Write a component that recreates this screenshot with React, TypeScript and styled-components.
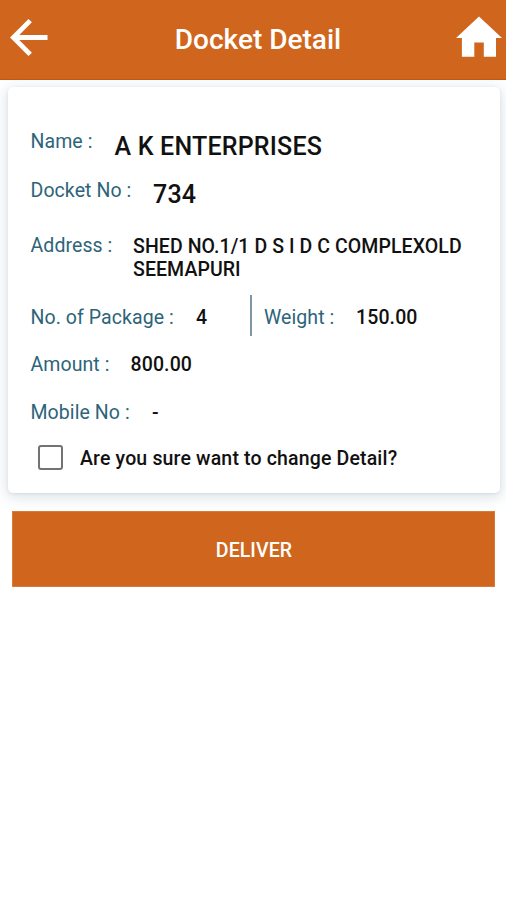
import React from 'react';
import styled, { createGlobalStyle } from 'styled-components';

const GlobalStyle = createGlobalStyle`
  * { box-sizing: border-box; }
  body { margin: 0; background: #fff; font-family: Roboto, "Liberation Sans", sans-serif; }
`;

const Screen = styled.div`
  width: 506px;
  height: 900px;
  overflow: hidden;
  background: #fff;
`;

const Toolbar = styled.header`
  display: flex;
  align-items: center;
  justify-content: space-between;
  height: 80px;
  padding: 0 3px 3px 7px;
  background: #d0661d;
  border-bottom: 1px solid #c65709;
`;

const Title = styled.h1`
  margin: 0;
  padding: 4px 0 0 12px;
  color: #fff;
  font-size: 28px;
  font-weight: 500;
  line-height: 34px;
`;

const IconButton = styled.button`
  display: flex;
  padding: 0;
  border: 0;
  background: none;
`;

const Content = styled.main`
  padding: 7px 6px 0 8px;
`;

const Card = styled.section`
  height: 406px;
  padding: 43px 23px 0 22.5px;
  border-radius: 5px;
  background: #fff;
  box-shadow: 0 1px 3px rgba(70, 95, 110, 0.12), 0 3px 14px 2px rgba(90, 130, 155, 0.2);
`;

const Row = styled.div<{ $height: number }>`
  display: flex;
  align-items: flex-start;
  height: ${(p) => p.$height}px;
`;

const Label = styled.span<{ $width: number; $drop?: boolean }>`
  flex: none;
  width: ${(p) => p.$width}px;
  padding-top: ${(p) => (p.$drop ? 1 : 0)}px;
  color: #2d6479;
  font-size: 19.5px;
  line-height: 24px;
  letter-spacing: 0.08px;
  white-space: nowrap;
`;

const Value = styled.span`
  padding-top: 1px;
  color: #111;
  font-size: 19.5px;
  font-weight: 500;
  line-height: 24px;
  letter-spacing: 0.12px;
  white-space: nowrap;
`;

const Address = styled(Value)`
  line-height: 23px;
  letter-spacing: 0.08px;
`;

const LargeValue = styled(Value)<{ $top: number }>`
  padding-top: ${(p) => p.$top}px;
  font-size: 25px;
  line-height: 30px;
  letter-spacing: 0.2px;
`;

const Question = styled(Value)`
  letter-spacing: 0.16px;
`;

const Half = styled.div<{ $width?: number }>`
  display: flex;
  width: ${(p) => (p.$width ? `${p.$width}px` : 'auto')};
`;

const Divider = styled.div`
  width: 2px;
  height: 41px;
  margin: -10px 12px 0 0;
  background: #7d97a8;
`;

const CheckRow = styled.label`
  display: flex;
  align-items: center;
  gap: 17.5px;
  height: 24px;
  padding-left: 7px;
`;

const Checkbox = styled.input`
  appearance: none;
  width: 25px;
  height: 25px;
  flex: none;
  margin: 0 0 1px;
  border: 2px solid #737373;
  border-radius: 3px;
  background: #fff;
`;

const DeliverButton = styled.button`
  display: block;
  position: relative;
  width: 483px;
  height: 76px;
  margin: 18px 0 0 4px;
  padding: 3px 0 0 1px;
  border: 1px solid #d87a3c;
  background: #d0661d;
  color: #fff;
  font-family: inherit;
  font-size: 19.5px;
  font-weight: 500;
  letter-spacing: 0.1px;
`;

export default function App() {
  return (
    <>
      <GlobalStyle />
      <Screen>
        <Toolbar>
          <IconButton aria-label="Back">
            <svg width="42" height="42" viewBox="0 0 42 42" fill="none" stroke="#fff" strokeWidth="4.8">
              <path d="M40.5 20.5H6M23.2 3.6L6.4 20.5L23.2 37.4" />
            </svg>
          </IconButton>
          <Title>Docket Detail</Title>
          <IconButton aria-label="Home">
            <svg width="48" height="44" viewBox="0 0 48 44" fill="#fff">
              <path d="M24 0.5L47 22H41V40.7H28.8V26.5H19.3V40.7H6.9V22H1Z" />
            </svg>
          </IconButton>
        </Toolbar>
        <Content>
          <Card>
            <Row $height={49}>
              <Label $width={84}>Name :</Label>
              <LargeValue $top={2}>A K ENTERPRISES</LargeValue>
            </Row>
            <Row $height={55}>
              <Label $width={122.5}>Docket No :</Label>
              <LargeValue $top={1}>734</LargeValue>
            </Row>
            <Row $height={71}>
              <Label $width={102.5}>Address :</Label>
              <Address>SHED NO.1/1 D S I D C COMPLEXOLD<br />SEEMAPURI</Address>
            </Row>
            <Row $height={47}>
              <Half $width={219.5}>
                <Label $width={165.5} $drop>No. of Package :</Label>
                <Value>4</Value>
              </Half>
              <Divider />
              <Half>
                <Label $width={92} $drop>Weight :</Label>
                <Value>150.00</Value>
              </Half>
            </Row>
            <Row $height={48}>
              <Label $width={100} $drop>Amount :</Label>
              <Value>800.00</Value>
            </Row>
            <Row $height={46}>
              <Label $width={121.5} $drop>Mobile No :</Label>
              <Value>-</Value>
            </Row>
            <CheckRow>
              <Checkbox type="checkbox" />
              <Question>Are you sure want to change Detail?</Question>
            </CheckRow>
          </Card>
          <DeliverButton>DELIVER</DeliverButton>
        </Content>
      </Screen>
    </>
  );
}
